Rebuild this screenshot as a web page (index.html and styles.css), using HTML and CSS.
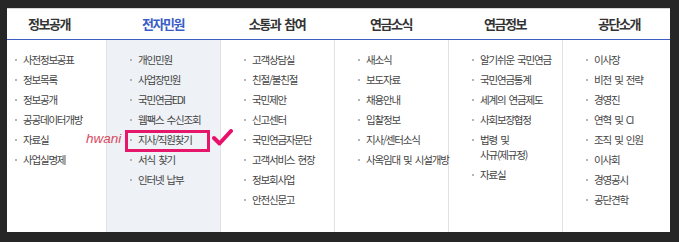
FILE: index.html
```html
<!DOCTYPE html>
<html lang="ko">
  <head>
    <meta charset="UTF-8" />
    <meta name="viewport" content="width=device-width, initial-scale=1.0" />
    <title>국민연금 전체메뉴</title>
    <link rel="stylesheet" href="styles.css">
  </head>
  <body>
    <div class="frame">
      <nav class="panel">
        <div class="menu">
          <div class="col">
            <h2 class="col-title">정보공개</h2>
            <ul class="sub">
              <li>사전정보공표</li>
              <li>정보목록</li>
              <li>정보공개</li>
              <li>공공데이터개방</li>
              <li>자료실</li>
              <li>사업실명제</li>
            </ul>
          </div>
          <div class="col active">
            <h2 class="col-title">전자민원</h2>
            <ul class="sub">
              <li>개인민원</li>
              <li>사업장민원</li>
              <li>국민연금EDI</li>
              <li>웹팩스 수신조회</li>
              <li class="picked">
                지사/직원찾기
                <span class="ring"></span>
                <span class="tag">hwani</span>
                <svg class="tick" width="21" height="17" viewBox="0 0 21 17">
                  <path d="M2 9 L7.5 14.5 L19 2" fill="none" stroke="#e8106a" stroke-width="4" stroke-linecap="round" stroke-linejoin="round"/>
                </svg>
              </li>
              <li>서식 찾기</li>
              <li>인터넷 납부</li>
            </ul>
          </div>
          <div class="col">
            <h2 class="col-title">소통과 참여</h2>
            <ul class="sub">
              <li>고객상담실</li>
              <li>친절/불친절</li>
              <li>국민제안</li>
              <li>신고센터</li>
              <li>국민연금자문단</li>
              <li>고객서비스 현장</li>
              <li>정보회사업</li>
              <li>안전신문고</li>
            </ul>
          </div>
          <div class="col">
            <h2 class="col-title">연금소식</h2>
            <ul class="sub">
              <li>새소식</li>
              <li>보도자료</li>
              <li>채용안내</li>
              <li>입찰정보</li>
              <li>지사/센터소식</li>
              <li>사옥임대 및 시설개방</li>
            </ul>
          </div>
          <div class="col">
            <h2 class="col-title">연금정보</h2>
            <ul class="sub">
              <li>알기쉬운 국민연금</li>
              <li>국민연금통계</li>
              <li>세계의 연금제도</li>
              <li>사회보장협정</li>
              <li>법령 및<br />사규(제규정)</li>
              <li>자료실</li>
            </ul>
          </div>
          <div class="col">
            <h2 class="col-title">공단소개</h2>
            <ul class="sub">
              <li>이사장</li>
              <li>비전 및 전략</li>
              <li>경영진</li>
              <li>연혁 및 CI</li>
              <li>조직 및 인원</li>
              <li>이사회</li>
              <li>경영공시</li>
              <li>공단견학</li>
            </ul>
          </div>
        </div>
      </nav>
    </div>
  </body>
</html>
```

FILE: styles.css
```css
body {
  margin: 0;
  background: #262626;
  font-family: "Noto Sans CJK KR", "Noto Sans", sans-serif;
}
.frame {
  padding: 8px 9px 10px 7px;
}
.panel {
  height: 224px;
  background: #fff;
  overflow: hidden;
  border-top: 1px solid #d6d6d6;
  box-sizing: border-box;
}
.menu {
  display: grid;
  grid-template-columns: repeat(6, 114px);
  margin-left: -15px;
  height: 100%;
}
.col {
  display: flex;
  flex-direction: column;
}
.col-title {
  margin: 0;
  height: 30px;
  line-height: 29px;
  text-align: center;
  font-size: 13px;
  font-weight: 700;
  letter-spacing: -1.5px;
  word-spacing: 2px;
  color: #333;
  border-bottom: 1px solid #3f5ec4;
}
.active .col-title {
  color: #3a5dc6;
}
.sub {
  flex: 1;
  list-style: none;
  margin: 0;
  padding: 12px 0 0;
  border-left: 1px solid #e1e1e1;
}
.col:first-child .sub {
  border-left: none;
}
.active .sub {
  background: #eef1f5;
  border-left-color: #dde2e8;
}
.sub li {
  position: relative;
  display: flex;
  align-items: flex-start;
  padding-left: 23px;
  margin-bottom: 5px;
  font-size: 10.5px;
  line-height: 15px;
  letter-spacing: -1.2px;
  word-spacing: 1.5px;
  color: #444;
  white-space: nowrap;
}
.sub li::before {
  content: "";
  flex: none;
  width: 2px;
  height: 2px;
  margin: 7px 6px 0 0;
  background: #b5b5b5;
}
.ring {
  position: absolute;
  left: 18px;
  top: -2px;
  width: 85px;
  height: 22px;
  border: 3px solid #e6176b;
  box-sizing: border-box;
}
.tag {
  position: absolute;
  left: -21px;
  top: -1px;
  font-family: "Liberation Sans", sans-serif;
  font-size: 13.5px;
  font-style: italic;
  letter-spacing: 0;
  word-spacing: 0;
  color: #d84a5f;
}
.tick {
  position: absolute;
  left: 105px;
  top: -3px;
}
```
